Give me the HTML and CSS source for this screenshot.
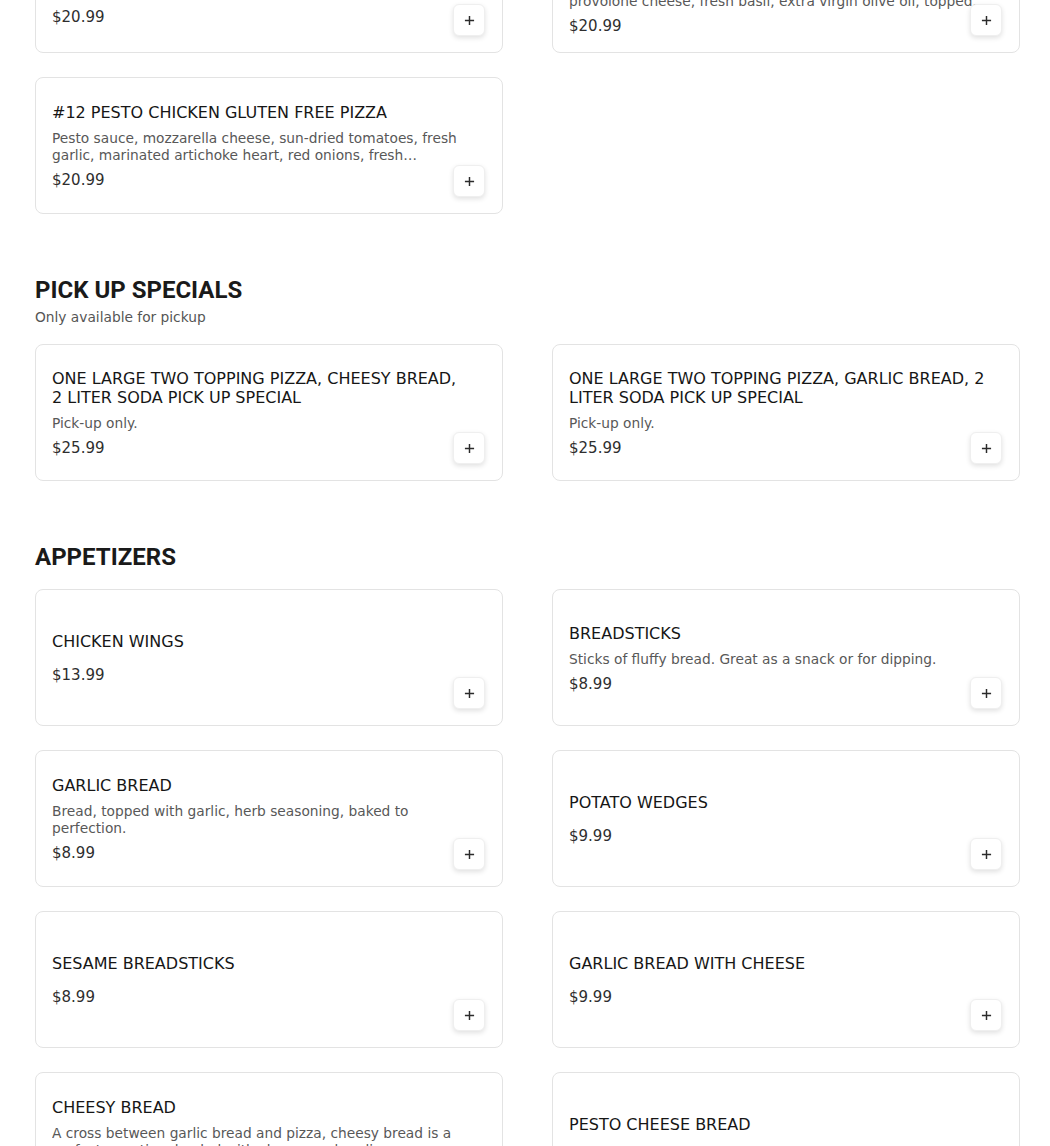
FILE: index.html
```html
<!DOCTYPE html>
<html lang="en">
<head>
<meta charset="utf-8">
<title>Menu</title>
<link rel="stylesheet" href="styles.css">
</head>
<body>
<main class="page">
  <section class="section section-first">
    <div class="grid">
      <article class="card">
        <div class="info">
          <h3 class="title">#11 BBQ CHICKEN GLUTEN FREE PIZZA</h3>
          <p class="desc">BBQ sauce, mozzarella cheese, grilled chicken, red onions, crispy bacon, green peppers, fresh cilantro and a drizzle of sauce.</p>
          <p class="price">$20.99</p>
        </div>
        <button class="add" type="button" aria-label="Add"><svg viewBox="0 0 12 12" width="11" height="11"><path d="M6 1v10M1 6h10" stroke="#2b2b2b" stroke-width="1.6" fill="none"/></svg></button>
      </article>
      <article class="card">
        <div class="info">
          <h3 class="title">#10 MARGHERITA GLUTEN FREE PIZZA WITH FRESH TOMATOES</h3>
          <p class="desc">Garlic olive oil base, roma tomatoes, mozzarella &amp; provolone cheese, fresh basil, extra virgin olive oil, topped.</p>
          <p class="price">$20.99</p>
        </div>
        <button class="add" type="button" aria-label="Add"><svg viewBox="0 0 12 12" width="11" height="11"><path d="M6 1v10M1 6h10" stroke="#2b2b2b" stroke-width="1.6" fill="none"/></svg></button>
      </article>
      <article class="card">
        <div class="info">
          <h3 class="title">#12 PESTO CHICKEN GLUTEN FREE PIZZA</h3>
          <p class="desc">Pesto sauce, mozzarella cheese, sun-dried tomatoes, fresh garlic, marinated artichoke heart, red onions, fresh mushrooms, grilled chicken.</p>
          <p class="price">$20.99</p>
        </div>
        <button class="add" type="button" aria-label="Add"><svg viewBox="0 0 12 12" width="11" height="11"><path d="M6 1v10M1 6h10" stroke="#2b2b2b" stroke-width="1.6" fill="none"/></svg></button>
      </article>
    </div>
  </section>

  <section class="section">
    <header class="section-head">
      <h2 class="section-title">PICK UP SPECIALS</h2>
      <p class="section-sub">Only available for pickup</p>
    </header>
    <div class="grid">
      <article class="card">
        <div class="info">
          <h3 class="title">ONE LARGE TWO TOPPING PIZZA, CHEESY BREAD, 2 LITER SODA PICK UP SPECIAL</h3>
          <p class="desc">Pick-up only.</p>
          <p class="price">$25.99</p>
        </div>
        <button class="add" type="button" aria-label="Add"><svg viewBox="0 0 12 12" width="11" height="11"><path d="M6 1v10M1 6h10" stroke="#2b2b2b" stroke-width="1.6" fill="none"/></svg></button>
      </article>
      <article class="card">
        <div class="info">
          <h3 class="title">ONE LARGE TWO TOPPING PIZZA, GARLIC BREAD, 2 LITER SODA PICK UP SPECIAL</h3>
          <p class="desc">Pick-up only.</p>
          <p class="price">$25.99</p>
        </div>
        <button class="add" type="button" aria-label="Add"><svg viewBox="0 0 12 12" width="11" height="11"><path d="M6 1v10M1 6h10" stroke="#2b2b2b" stroke-width="1.6" fill="none"/></svg></button>
      </article>
    </div>
  </section>

  <section class="section">
    <header class="section-head">
      <h2 class="section-title">APPETIZERS</h2>
    </header>
    <div class="grid">
      <article class="card">
        <div class="info">
          <h3 class="title">CHICKEN WINGS</h3>
          <p class="desc"></p>
          <p class="price">$13.99</p>
        </div>
        <button class="add" type="button" aria-label="Add"><svg viewBox="0 0 12 12" width="11" height="11"><path d="M6 1v10M1 6h10" stroke="#2b2b2b" stroke-width="1.6" fill="none"/></svg></button>
      </article>
      <article class="card">
        <div class="info">
          <h3 class="title">BREADSTICKS</h3>
          <p class="desc">Sticks of fluffy bread. Great as a snack or for dipping.</p>
          <p class="price">$8.99</p>
        </div>
        <button class="add" type="button" aria-label="Add"><svg viewBox="0 0 12 12" width="11" height="11"><path d="M6 1v10M1 6h10" stroke="#2b2b2b" stroke-width="1.6" fill="none"/></svg></button>
      </article>
      <article class="card">
        <div class="info">
          <h3 class="title">GARLIC BREAD</h3>
          <p class="desc">Bread, topped with garlic, herb seasoning, baked to perfection.</p>
          <p class="price">$8.99</p>
        </div>
        <button class="add" type="button" aria-label="Add"><svg viewBox="0 0 12 12" width="11" height="11"><path d="M6 1v10M1 6h10" stroke="#2b2b2b" stroke-width="1.6" fill="none"/></svg></button>
      </article>
      <article class="card">
        <div class="info">
          <h3 class="title">POTATO WEDGES</h3>
          <p class="desc"></p>
          <p class="price">$9.99</p>
        </div>
        <button class="add" type="button" aria-label="Add"><svg viewBox="0 0 12 12" width="11" height="11"><path d="M6 1v10M1 6h10" stroke="#2b2b2b" stroke-width="1.6" fill="none"/></svg></button>
      </article>
      <article class="card">
        <div class="info">
          <h3 class="title">SESAME BREADSTICKS</h3>
          <p class="desc"></p>
          <p class="price">$8.99</p>
        </div>
        <button class="add" type="button" aria-label="Add"><svg viewBox="0 0 12 12" width="11" height="11"><path d="M6 1v10M1 6h10" stroke="#2b2b2b" stroke-width="1.6" fill="none"/></svg></button>
      </article>
      <article class="card">
        <div class="info">
          <h3 class="title">GARLIC BREAD WITH CHEESE</h3>
          <p class="desc"></p>
          <p class="price">$9.99</p>
        </div>
        <button class="add" type="button" aria-label="Add"><svg viewBox="0 0 12 12" width="11" height="11"><path d="M6 1v10M1 6h10" stroke="#2b2b2b" stroke-width="1.6" fill="none"/></svg></button>
      </article>
      <article class="card">
        <div class="info">
          <h3 class="title">CHEESY BREAD</h3>
          <p class="desc">A cross between garlic bread and pizza, cheesy bread is a perfect appetizer loaded with cheese and garlic.</p>
          <p class="price">$10.99</p>
        </div>
        <button class="add" type="button" aria-label="Add"><svg viewBox="0 0 12 12" width="11" height="11"><path d="M6 1v10M1 6h10" stroke="#2b2b2b" stroke-width="1.6" fill="none"/></svg></button>
      </article>
      <article class="card">
        <div class="info">
          <h3 class="title">PESTO CHEESE BREAD</h3>
          <p class="desc"></p>
          <p class="price">$10.99</p>
        </div>
        <button class="add" type="button" aria-label="Add"><svg viewBox="0 0 12 12" width="11" height="11"><path d="M6 1v10M1 6h10" stroke="#2b2b2b" stroke-width="1.6" fill="none"/></svg></button>
      </article>
    </div>
  </section>
</main>
</body>
</html>
```

FILE: styles.css
```css
* {
  box-sizing: border-box;
}

html, body {
  margin: 0;
  padding: 0;
  background: #ffffff;
}

body {
  font-family: "DejaVu Sans", "Open Sans", sans-serif;
  color: #1c1c1c;
  overflow: hidden;
}

.page {
  padding: 0 30px 0 35px;
}

.section {
  margin-top: 62px;
}

.section-first {
  margin-top: -89px;
}

.section-head {
  margin-bottom: 18px;
}

.section-title {
  margin: 0;
  font-family: "Roboto", "Liberation Sans", sans-serif;
  font-weight: 700;
  font-size: 24px;
  line-height: 28px;
  color: #1a1a1a;
}

.section-sub {
  margin: 5px 0 0;
  font-size: 13.75px;
  line-height: 17px;
  color: #555555;
}

.grid {
  display: grid;
  grid-template-columns: 1fr 1fr;
  column-gap: 49px;
  row-gap: 24px;
}

.card {
  position: relative;
  min-height: 137px;
  border: 1px solid #e3e3e3;
  border-radius: 8px;
  padding: 18px 16px 16px;
  display: flex;
  align-items: center;
  background: #ffffff;
}

.info {
  width: 100%;
  padding-right: 17px;
  display: flex;
  flex-direction: column;
}

.title {
  margin: 0;
  font-size: 16px;
  line-height: 19px;
  font-weight: 400;
  color: #161616;
}

.desc {
  margin: 8px 0 0;
  font-size: 13.75px;
  line-height: 17px;
  color: #585858;
  display: -webkit-box;
  -webkit-line-clamp: 2;
  -webkit-box-orient: vertical;
  overflow: hidden;
}

.price {
  margin: 6px 0 0;
  font-size: 15px;
  line-height: 20px;
  color: #2e2e2e;
}

.add {
  position: absolute;
  right: 17px;
  bottom: 16px;
  width: 32px;
  height: 32px;
  padding: 0;
  border: 1px solid #efefef;
  border-radius: 6px;
  background: #ffffff;
  box-shadow: 0 2px 5px rgba(0, 0, 0, 0.12);
  display: flex;
  align-items: center;
  justify-content: center;
  cursor: pointer;
}
```
